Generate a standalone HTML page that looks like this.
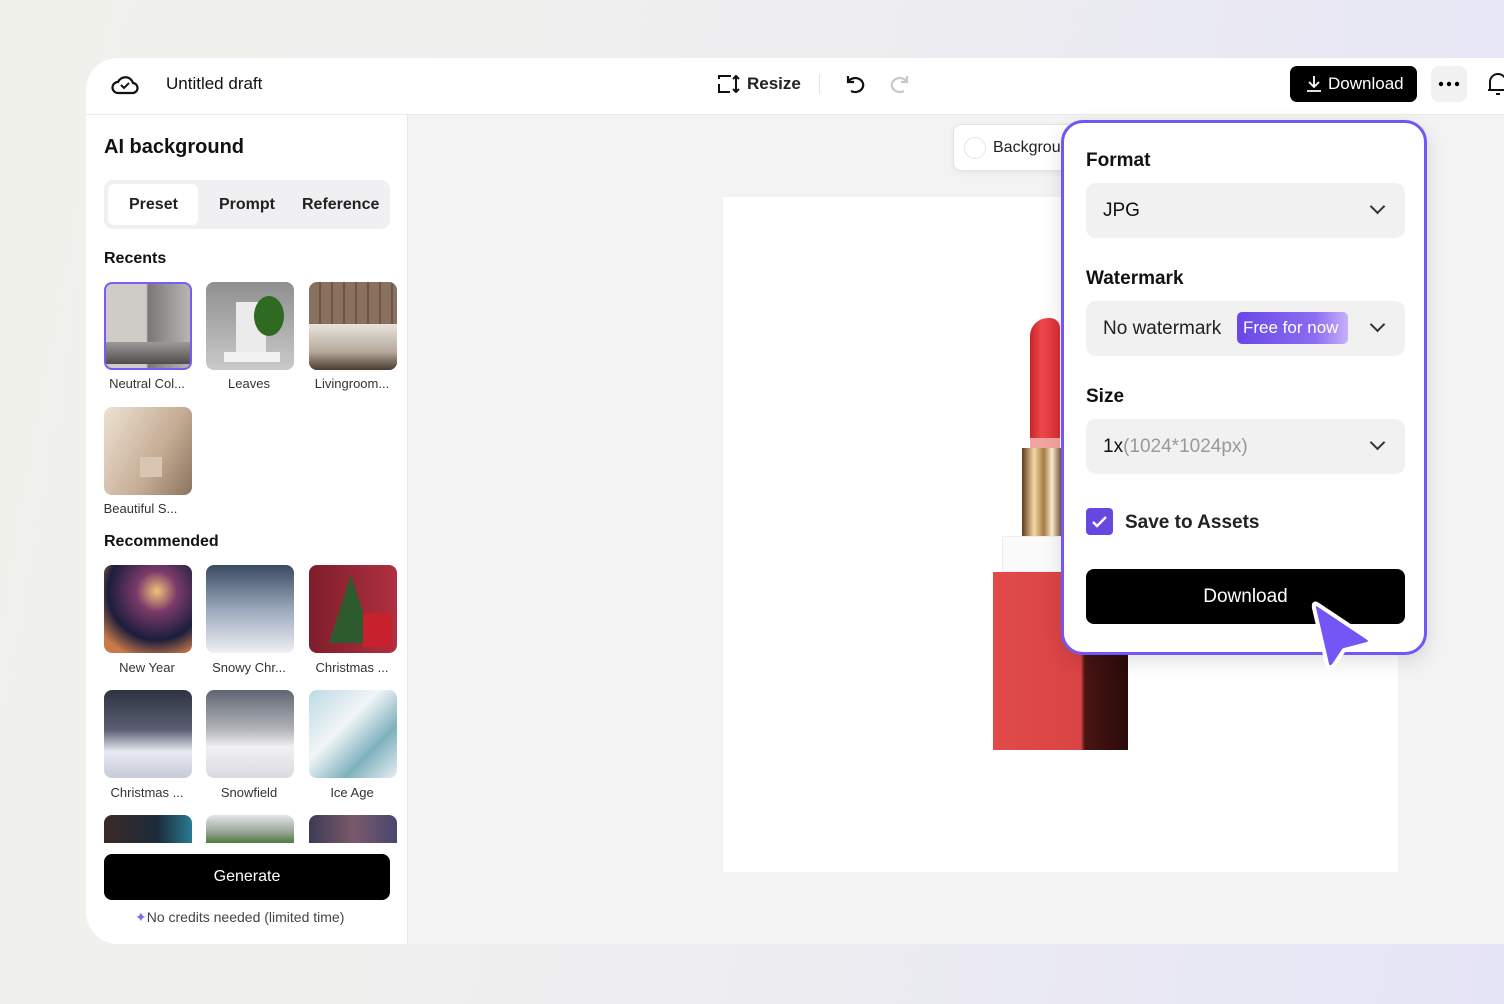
<!DOCTYPE html>
<html><head><meta charset="utf-8"><style>
*{box-sizing:border-box;margin:0;padding:0}
body{width:1504px;height:1004px;overflow:hidden;font-family:"Liberation Sans",sans-serif;background:linear-gradient(100deg,#f1f1ec 0%,#eeeef0 50%,#e5e4f6 100%);position:relative;color:#111}
.a{position:absolute}
.win{left:86px;top:58px;width:1430px;height:886px;background:#f3f3f3;border-radius:32px 0 0 32px;overflow:hidden}
.hdr{left:0;top:0;width:100%;height:57px;background:#fff;border-bottom:1px solid #ebebeb}
.lp{left:0;top:57px;width:322px;height:829px;background:#fff;border-right:1px solid #e8e8e8}
.th{width:88px;height:88px;border-radius:8px;overflow:hidden}
.lb{font-size:13px;color:#333;width:100px;text-align:center}
.sec{font-size:16px;font-weight:bold}
.sel{left:22px;width:319px;height:55px;background:#f1f1f1;border-radius:10px}
.lab{font-size:19px;font-weight:bold;left:22px}
.chev{right:22px;top:18px;width:11px;height:11px;border-right:2px solid #333;border-bottom:2px solid #333;transform:rotate(45deg)}
</style></head><body>
<div class="a win">
 <div class="a hdr">
  <svg class="a" style="left:25px;top:13px" width="28" height="26" viewBox="0 0 28 26"><path d="M7 22h14a5 5 0 0 0 1-10 8 8 0 0 0-15-1 5.5 5.5 0 0 0 0 11z" fill="none" stroke="#111" stroke-width="2.2"/><path d="M10 14l3 3 5-5" fill="none" stroke="#111" stroke-width="2"/></svg>
  <div class="a" style="left:80px;top:16px;font-size:17px">Untitled draft</div>
  <svg class="a" style="left:630px;top:14px" width="24" height="24" viewBox="0 0 24 24" fill="none" stroke="#111" stroke-width="2"><path d="M3 7V4h12M3 12v8h11M20 4v16M17 7l3-3 3 3M17 17l3 3 3-3"/></svg>
  <div class="a" style="left:661px;top:16px;font-size:17px;font-weight:bold;color:#222">Resize</div>
  <div class="a" style="left:733px;top:16px;width:1px;height:20px;background:#e5e5e5"></div>
  <svg class="a" style="left:757px;top:14px" width="24" height="24" viewBox="0 0 24 24" fill="none" stroke="#111" stroke-width="2.2"><path d="M5 4v6h6M5 10a8 7 0 1 1 3 9"/></svg>
  <svg class="a" style="left:802px;top:14px" width="24" height="24" viewBox="0 0 24 24" fill="none" stroke="#c8c8c8" stroke-width="2.2"><path d="M19 4v6h-6M19 10a8 7 0 1 0-3 9"/></svg>
  <div class="a" style="left:1204px;top:8px;width:127px;height:36px;background:#000;border-radius:7px;color:#fff;font-size:17px;padding:8px 0 0 38px">Download</div>
  <svg class="a" style="left:1220px;top:17px" width="16" height="18" viewBox="0 0 16 18" fill="none" stroke="#fff" stroke-width="1.8"><path d="M8 1v11M3 7l5 5 5-5M1 16h14"/></svg>
  <div class="a" style="left:1345px;top:8px;width:36px;height:36px;background:#f1f1f1;border-radius:8px"><svg width="36" height="36"><circle cx="10" cy="18" r="2.2"/><circle cx="18" cy="18" r="2.2"/><circle cx="26" cy="18" r="2.2"/></svg></div>
  <svg class="a" style="left:1400px;top:13px" width="24" height="26" viewBox="0 0 24 26" fill="none" stroke="#111" stroke-width="2"><path d="M4 19V11a8 8 0 0 1 16 0v8zM2 19h20M10 23h4"/></svg>
 </div>
 <div class="a lp">
  <div class="a" style="left:18px;top:21px;font-size:20px;font-weight:bold">AI background</div>
  <div class="a" style="left:18px;top:65px;width:286px;height:49px;background:#f0f0f2;border-radius:9px"></div>
  <div class="a" style="left:22px;top:69px;width:90px;height:41px;background:#fff;border-radius:6px"></div>
  <div class="a" style="left:43px;top:81px;font-size:16px;font-weight:bold;color:#222">Preset</div>
  <div class="a" style="left:133px;top:81px;font-size:16px;font-weight:bold;color:#222">Prompt</div>
  <div class="a" style="left:216px;top:81px;font-size:16px;font-weight:bold;color:#222">Reference</div>
  <div class="a sec" style="left:18px;top:135px">Recents</div>
  <div class="a th" style="left:18px;top:167px;border:2px solid #7a5cf5;background:linear-gradient(90deg,#cfccc8 0 48%,#7a7776 50%,#b8b6b4 100%)"><div class="a" style="left:0;top:58px;width:84px;height:22px;background:linear-gradient(#9c9a98,#4f4d4c)"></div></div>
  <div class="a th" style="left:120px;top:167px;background:linear-gradient(#8f8f8f,#c9c9c9)"><div class="a" style="left:30px;top:20px;width:30px;height:55px;background:#ebebeb"></div><div class="a" style="left:48px;top:14px;width:30px;height:40px;border-radius:50%;background:#2f6a22"></div><div class="a" style="left:18px;top:70px;width:56px;height:10px;background:#f2f2f2"></div></div>
  <div class="a th" style="left:223px;top:167px;background:repeating-linear-gradient(90deg,#8a715f 0 10px,#6e5646 10px 12px)"><div class="a" style="left:0;top:42px;width:88px;height:46px;background:linear-gradient(#e8e3dc,#b7aa9b 60%,#4b3b31)"></div></div>
  <div class="a lb" style="left:11px;top:261px">Neutral Col...</div>
  <div class="a lb" style="left:113px;top:261px">Leaves</div>
  <div class="a lb" style="left:216px;top:261px">Livingroom...</div>
  <div class="a th" style="left:18px;top:292px;background:linear-gradient(120deg,#eee2d3,#c4ab93 60%,#8c735e)"><div class="a" style="left:36px;top:50px;width:22px;height:20px;background:#d9c6b2"></div></div>
  <div class="a lb" style="left:12px;top:386px;width:85px">Beautiful S...</div>
  <div class="a sec" style="left:18px;top:418px">Recommended</div>
  <div class="a th" style="left:18px;top:450px;background:radial-gradient(circle at 60% 30%,#f3c27a 0,#7a3b6a 25%,#1b1d3c 60%,#c97a48 85%)"></div>
  <div class="a th" style="left:120px;top:450px;background:linear-gradient(#3a4a62,#9aa7b9 50%,#eef0f5)"></div>
  <div class="a th" style="left:223px;top:450px;background:linear-gradient(90deg,#7e1d2c,#b03040);"><div class="a" style="left:20px;top:10px;width:0;height:0;border-left:22px solid transparent;border-right:22px solid transparent;border-bottom:68px solid #2d5b2e"></div><div class="a" style="left:54px;top:48px;width:28px;height:34px;background:#c9202e"></div></div>
  <div class="a lb" style="left:11px;top:545px">New Year</div>
  <div class="a lb" style="left:113px;top:545px">Snowy Chr...</div>
  <div class="a lb" style="left:216px;top:545px">Christmas ...</div>
  <div class="a th" style="left:18px;top:575px;background:linear-gradient(#2c3342,#5b5f72 45%,#e7e9f1 70%,#c6cbd9)"></div>
  <div class="a th" style="left:120px;top:575px;background:linear-gradient(#5f6571,#b2b4ba 45%,#f1f1f3 65%,#d9dae0)"></div>
  <div class="a th" style="left:223px;top:575px;background:linear-gradient(135deg,#bcdbe3,#f1f5f7 40%,#7fb1bd 70%,#e6eef2)"></div>
  <div class="a lb" style="left:11px;top:670px">Christmas ...</div>
  <div class="a lb" style="left:113px;top:670px">Snowfield</div>
  <div class="a lb" style="left:216px;top:670px">Ice Age</div>
  <div class="a" style="left:18px;top:700px;width:88px;height:28px;border-radius:8px 8px 0 0;background:linear-gradient(90deg,#3a2a26,#1c2b3a 60%,#2a7a92)"></div>
  <div class="a" style="left:120px;top:700px;width:88px;height:28px;border-radius:8px 8px 0 0;background:linear-gradient(#e5e5e5,#9aa59a 60%,#4f7a3b)"></div>
  <div class="a" style="left:223px;top:700px;width:88px;height:28px;border-radius:8px 8px 0 0;background:linear-gradient(90deg,#3d3a55,#7a5a6a 50%,#4a4670)"></div>
  <div class="a" style="left:18px;top:739px;width:286px;height:46px;background:#000;border-radius:8px;color:#fff;font-size:16px;text-align:center;line-height:46px">Generate</div>
  <div class="a" style="left:49px;top:794px;font-size:14px;color:#444"><span style="color:#7a6af5">✦</span>No credits needed (limited time)</div>
 </div>
 <div class="a" style="left:637px;top:139px;width:675px;height:675px;background:#fff"></div>
 <div class="a" style="left:867px;top:66px;width:140px;height:47px;background:#fff;border:1px solid #e3e3e3;border-radius:8px;box-shadow:0 2px 6px rgba(0,0,0,.06)"><div class="a" style="left:10px;top:12px;width:22px;height:22px;border:1px solid #e5e5e5;border-radius:50%"></div><div class="a" style="left:39px;top:14px;font-size:16px;color:#222">Background</div></div>
 <div class="a" style="left:944px;top:260px;width:30px;height:130px;background:linear-gradient(90deg,#c9242a,#ee4a4c 40%,#d92e34);border-radius:18px 10px 0 0"></div>
 <div class="a" style="left:944px;top:380px;width:30px;height:10px;background:#f2a5a0"></div>
 <div class="a" style="left:936px;top:390px;width:40px;height:88px;background:linear-gradient(90deg,#5d3a1c,#f4d8a4 30%,#a57a45 55%,#fff0d0 75%,#6b4a2b)"></div>
 <div class="a" style="left:916px;top:478px;width:60px;height:36px;background:#fafafa;border:1px solid #eee"></div>
 <div class="a" style="left:907px;top:514px;width:135px;height:178px;background:linear-gradient(90deg,#e24a4a,#d94445 65%,#4b1414 68%,#2a0a0a)"></div>
 <div class="a" style="left:975px;top:62px;width:366px;height:535px;background:#fff;border:3px solid #7356f5;border-radius:22px;box-shadow:0 6px 20px rgba(0,0,0,.12)">
  <div class="a lab" style="top:27px">Format</div>
  <div class="a sel" style="top:60px"><div class="a" style="left:17px;top:17px;font-size:19px">JPG</div><div class="a chev"></div></div>
  <div class="a lab" style="top:145px">Watermark</div>
  <div class="a sel" style="top:178px"><div class="a" style="left:17px;top:17px;font-size:19px;color:#222">No watermark</div><div class="a" style="left:151px;top:11px;width:111px;height:32px;border-radius:5px;background:linear-gradient(90deg,#6a47e6,#8b6df0 70%,#c8b0fb);color:#fff;font-size:17px;padding:6px 0 0 6px">Free for now</div><div class="a chev"></div></div>
  <div class="a lab" style="top:263px">Size</div>
  <div class="a sel" style="top:296px"><div class="a" style="left:17px;top:17px;font-size:19px">1x<span style="color:#999">(1024*1024px)</span></div><div class="a chev"></div></div>
  <div class="a" style="left:22px;top:385px;width:27px;height:27px;background:#6747e0;border-radius:4px"><svg width="27" height="27"><path d="M7 14l4 4 9-9" fill="none" stroke="#fff" stroke-width="2.4"/></svg></div>
  <div class="a" style="left:61px;top:389px;font-size:19px;font-weight:bold;color:#222">Save to Assets</div>
  <div class="a" style="left:22px;top:446px;width:319px;height:55px;background:#000;border-radius:8px;color:#fff;font-size:19px;text-align:center;line-height:55px">Download</div>
 </div>
</div>
<svg class="a" style="left:1305px;top:596px" width="72" height="80" viewBox="0 0 72 80"><path d="M12 8 Q8 6 9 12 L22 68 Q24 74 29 69 L39 54 L62 48 Q68 46 63 42 Z" fill="#7356f5" stroke="#fff" stroke-width="4" stroke-linejoin="round"/></svg>
</body></html>
